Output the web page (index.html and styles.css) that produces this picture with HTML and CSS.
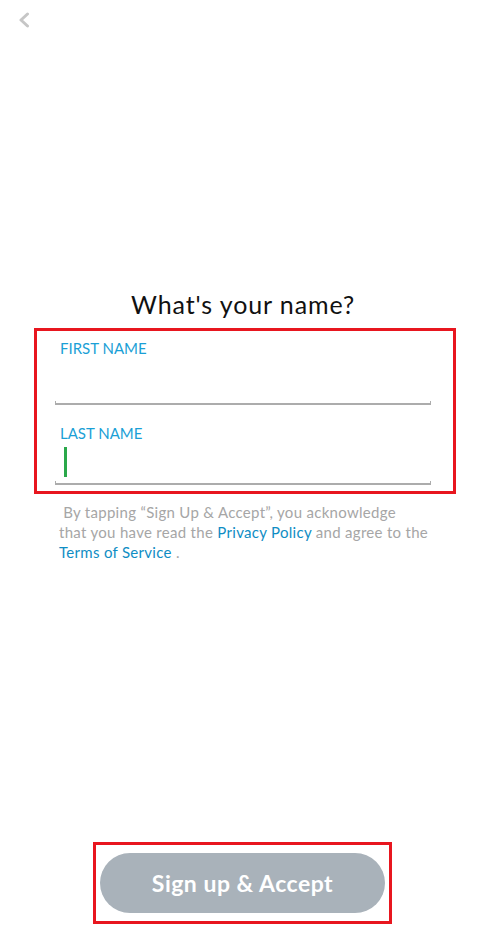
FILE: index.html
```html
<!DOCTYPE html>
<html lang="en">
<head>
<meta charset="utf-8">
<title>What's your name?</title>
<link rel="stylesheet" href="styles.css">
</head>
<body>
<div class="page">
  <div class="topbar">
    <svg class="back" width="12" height="16" viewBox="0 0 12 16" aria-hidden="true">
      <path d="M9.5 2 L3 8 L9.5 14" fill="none" stroke="#c6c6c6" stroke-width="3" stroke-linecap="round" stroke-linejoin="round"/>
    </svg>
  </div>
  <h1 class="title">What's your name?</h1>
  <div class="form-box">
    <div class="field">
      <div class="label">FIRST NAME</div>
      <div class="input"></div>
      <div class="line"></div>
    </div>
    <div class="field field-last">
      <div class="label">LAST NAME</div>
      <div class="input"><span class="cursor"></span></div>
      <div class="line"></div>
    </div>
  </div>
  <p class="legal">&nbsp;By tapping “Sign Up &amp; Accept”, you acknowledge<br>that you have read the <a class="link">Privacy Policy</a> and agree to the<br><a class="link">Terms of Service</a> .</p>
  <div class="spacer"></div>
  <div class="btn-box">
    <button class="btn">Sign up &amp; Accept</button>
  </div>
</div>
</body>
</html>
```
FILE: styles.css
```css
html, body {
  margin: 0;
  padding: 0;
  background: #ffffff;
}
body {
  font-family: Lato, "Open Sans", "Liberation Sans", sans-serif;
}
.page {
  display: flex;
  flex-direction: column;
  height: 933px;
  box-sizing: border-box;
}
.topbar {
  height: 40px;
  padding: 12px 0 0 18px;
  box-sizing: border-box;
}
.back {
  display: block;
}
.title {
  margin: 249px 0 0 0;
  text-align: center;
  font-size: 25px;
  letter-spacing: 0.9px;
  line-height: 30px;
  font-weight: 400;
  color: #111111;
}
.form-box {
  margin: 9px 30px 0 34px;
  border: 3px solid #e8161f;
  padding: 8px 22px 6px 18px;
}
.field-last {
  margin-top: 19px;
}
.label {
  padding-left: 5px;
  font-size: 15px;
  line-height: 18px;
  color: #1a9fd6;
}
.input {
  height: 44px;
}
.field-last .input {
  height: 39px;
  padding: 5px 0 0 9px;
  box-sizing: border-box;
}
.cursor {
  display: block;
  width: 3px;
  height: 30px;
  background: #2aa84a;
}
.line {
  height: 4px;
  border: 1px solid #acacac;
  border-top: none;
  border-bottom-width: 2px;
  box-sizing: border-box;
}
.legal {
  margin: 8px 30px 0 59px;
  font-size: 15px;
  letter-spacing: 0.3px;
  line-height: 20px;
  color: #a6a6a6;
}
.link {
  color: #0f8dc4;
}
.spacer {
  flex: 1;
}
.btn-box {
  margin: 0 94px 9px 93px;
  border: 3px solid #e8161f;
  padding: 8px 4px;
}
.btn {
  display: block;
  width: 100%;
  height: 60px;
  border: none;
  border-radius: 30px;
  background: #a9b2ba;
  color: #ffffff;
  font-family: Lato, "Open Sans", sans-serif;
  font-size: 23px;
  letter-spacing: 0.5px;
  font-weight: 700;
  padding: 0;
}
```
